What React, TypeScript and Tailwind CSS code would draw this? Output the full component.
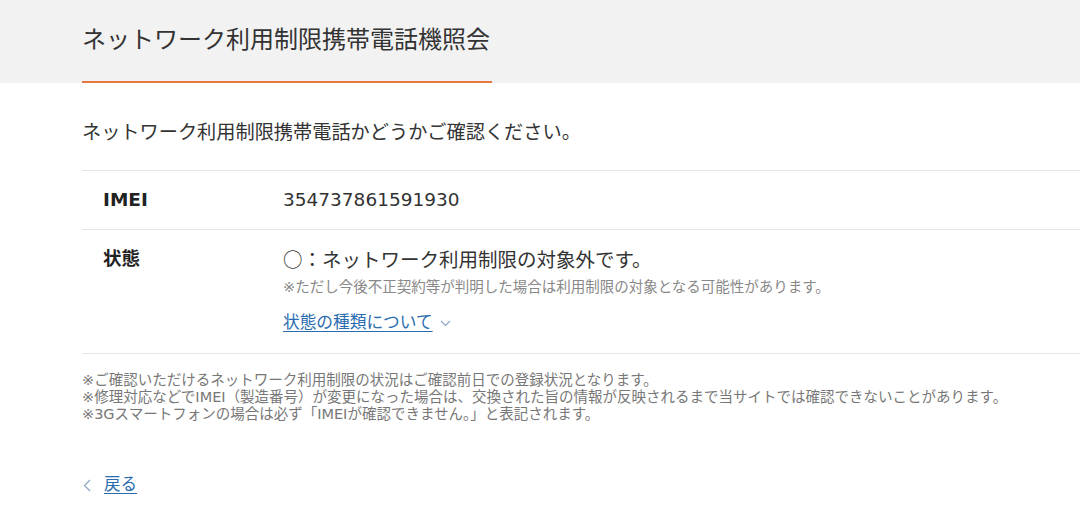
import React from "react";

const font = { fontFamily: '"DejaVu Sans", "Noto Sans CJK JP", sans-serif' };
const cjk = { fontFamily: '"Noto Sans CJK JP", sans-serif' };

export default function App() {
  return (
    <div className="min-h-[527px] w-full bg-white text-[#333]" style={font}>
      {/* Header */}
      <div className="bg-[#f2f2f2] pl-[82px]">
        <div className="w-[410px] border-b-2 border-[#e5773f] pt-[22px] pb-[23px]">
          <h1 className="text-[24px] leading-[36px] font-normal text-[#333] whitespace-nowrap">
            ネットワーク利用制限携帯電話機照会
          </h1>
        </div>
      </div>

      <div className="pl-[82px]">
        <p className="mt-[36px] text-[19.2px] leading-[28px] whitespace-nowrap">
          ネットワーク利用制限携帯電話かどうかご確認ください。
        </p>

        {/* Result table */}
        <div className="mt-[23px] border-t border-[#e5e5e5]">
          <div className="flex border-b border-[#e5e5e5] pt-[16px] pb-[16px]">
            <div className="w-[201px] shrink-0 pl-[21px] text-[18.5px] leading-[26px] font-bold text-[#222]">
              IMEI
            </div>
            <div className="text-[18.5px] leading-[26px] text-[#333]">354737861591930</div>
          </div>
          <div className="flex border-b border-[#e5e5e5] pt-[16px] pb-[19px]">
            <div className="w-[201px] shrink-0 pl-[21px] text-[18.5px] leading-[26px] font-bold text-[#222]">
              状態
            </div>
            <div className="flex flex-col">
              <div className="h-[26px] text-[19.5px] leading-[26px] text-[#333] whitespace-nowrap">
                <span style={cjk}>○</span>：ネットワーク利用制限の対象外です。
              </div>
              <div className="mt-[5px] text-[14.5px] leading-[20px] text-[#888] whitespace-nowrap">
                ※ただし今後不正契約等が判明した場合は利用制限の対象となる可能性があります。
              </div>
              <div className="mt-[13px] flex h-[24px] items-center gap-[7px] leading-[24px]">
                <a href="#" className="text-[16.7px] text-[#2a6cb0] underline underline-offset-[3px]">
                  状態の種類について
                </a>
                <svg width="11" height="7" viewBox="0 0 11 7" fill="none" className="mt-[2px]">
                  <path d="M1 1l4.5 4.5L10 1" stroke="#8aa6c4" strokeWidth="1.2" />
                </svg>
              </div>
            </div>
          </div>
        </div>

        {/* Notes */}
        <div className="mt-[18px] text-[14.5px] leading-[17px] text-[#777] whitespace-nowrap">
          <p>※ご確認いただけるネットワーク利用制限の状況はご確認前日での登録状況となります。</p>
          <p>
            ※修理対応などでIMEI（製造番号）が変更になった場合は、交換された旨の情報が反映されるまで当サイトでは確認できないことがあります。
          </p>
          <p>※3Gスマートフォンの場合は必ず「IMEIが確認できません。」と表記されます。</p>
        </div>

        {/* Back link */}
        <div className="mt-[50px] flex items-center gap-[13px] leading-[24px]">
          <svg width="8" height="13" viewBox="0 0 8 13" fill="none" className="ml-[1px]">
            <path d="M7 1L1.5 6.5 7 12" stroke="#8aa6c4" strokeWidth="1.2" />
          </svg>
          <a href="#" className="text-[16.5px] text-[#2a6cb0] underline underline-offset-[3px]">
            戻る
          </a>
        </div>
      </div>
    </div>
  );
}
